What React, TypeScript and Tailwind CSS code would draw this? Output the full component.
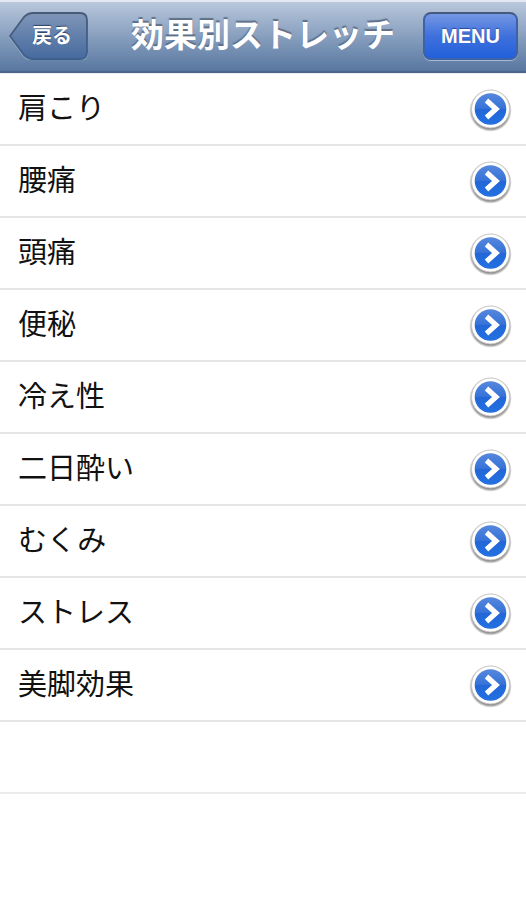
const items = [
  "肩こり",
  "腰痛",
  "頭痛",
  "便秘",
  "冷え性",
  "二日酔い",
  "むくみ",
  "ストレス",
  "美脚効果",
];

function BackButton() {
  return (
    <button
      type="button"
      className="relative flex h-12 w-20 items-center justify-end pr-4 text-xl font-bold text-white text-shadow-[0_-1px_1px_#2d4468]"
    >
      <svg
        className="absolute inset-0 h-full w-full"
        viewBox="0 0 80 48"
        fill="none"
        aria-hidden="true"
      >
        <defs>
          <linearGradient id="back-fill" x1="0" y1="0" x2="0" y2="1">
            <stop offset="0" stopColor="#8096b8" />
            <stop offset="0.5" stopColor="#627fab" />
            <stop offset="1" stopColor="#456a9f" />
          </linearGradient>
          <linearGradient id="back-stroke" x1="0" y1="0" x2="0" y2="1">
            <stop offset="0" stopColor="#485a77" />
            <stop offset="1" stopColor="#3f5f8e" />
          </linearGradient>
        </defs>
        <path
          d="M2 25 L16 6 Q20 2 25 2 H72 Q79 2 79 9 V41 Q79 48 72 48 H25 Q20 48 16 44 Z"
          stroke="#a9bad0"
          strokeOpacity="0.6"
          strokeWidth="2"
        />
        <path
          d="M2 24 L16 5 Q20 1 25 1 H72 Q79 1 79 8 V40 Q79 47 72 47 H25 Q20 47 16 43 Z"
          fill="url(#back-fill)"
          stroke="url(#back-stroke)"
          strokeWidth="1.8"
          strokeLinejoin="round"
        />
      </svg>
      <span className="relative">戻る</span>
    </button>
  );
}

function Chevron() {
  return (
    <svg className="h-12 w-11 shrink-0" viewBox="0 0 44 48" fill="none" aria-hidden="true">
      <defs>
        <radialGradient id="disc-shadow">
          <stop offset="0.82" stopColor="#444" stopOpacity="0.8" />
          <stop offset="1" stopColor="#444" stopOpacity="0" />
        </radialGradient>
        <linearGradient id="disc-fill" x1="0" y1="0" x2="0" y2="1">
          <stop offset="0" stopColor="#5687dc" />
          <stop offset="0.48" stopColor="#3673d8" />
          <stop offset="0.52" stopColor="#2267d7" />
          <stop offset="1" stopColor="#2371e2" />
        </linearGradient>
      </defs>
      <circle cx="22.5" cy="25.5" r="21.3" fill="url(#disc-shadow)" />
      <circle cx="22.5" cy="24" r="19" fill="#fff" stroke="#c8c8c4" strokeWidth="1" />
      <circle cx="22.5" cy="24" r="15.8" fill="url(#disc-fill)" />
      <path d="M18.5 15.5 L28 24 L18.5 32.5" stroke="#fff" strokeWidth="5.2" />
    </svg>
  );
}

export default function App() {
  return (
    <div className="min-h-screen bg-white font-['Liberation_Sans','Noto_Sans_CJK_JP',sans-serif]">
      <header className="grid h-[73px] grid-cols-[1fr_auto_1fr] items-center border-t-2 border-b-2 border-t-[#e3e8f1] border-b-[#49658b] bg-linear-to-b from-[#b9c8dc] to-[#5877a0] px-2 pb-px">
        <BackButton />
        <h1 className="text-[33px] leading-10 font-bold whitespace-nowrap text-white text-shadow-[0_-2px_1px_#5f6f87]">
          効果別ストレッチ
        </h1>
        <button
          type="button"
          className="h-12 justify-self-end rounded-lg border-2 border-[#3d62a8] border-t-[#45597f] bg-linear-to-b from-[#7597e4] via-[#3f70dc] to-[#2160dc] px-4 text-xl font-bold text-white shadow-[0_1px_0_#a9bad0] text-shadow-[0_-1px_1px_#2b4fa0]"
        >
          MENU
        </button>
      </header>
      <ul className="border-t border-[#eeeeee]">
        {items.map((item) => (
          <li key={item} className="border-b-2 border-[#e6e6e6]">
            <a
              href="#"
              className="flex h-[70px] items-center justify-between pr-[14px] pl-[18px] text-[29px] leading-10 text-[#111]"
            >
              <span>{item}</span>
              <Chevron />
            </a>
          </li>
        ))}
        <li className="h-18 border-b-2 border-[#ececec]" />
      </ul>
    </div>
  );
}
